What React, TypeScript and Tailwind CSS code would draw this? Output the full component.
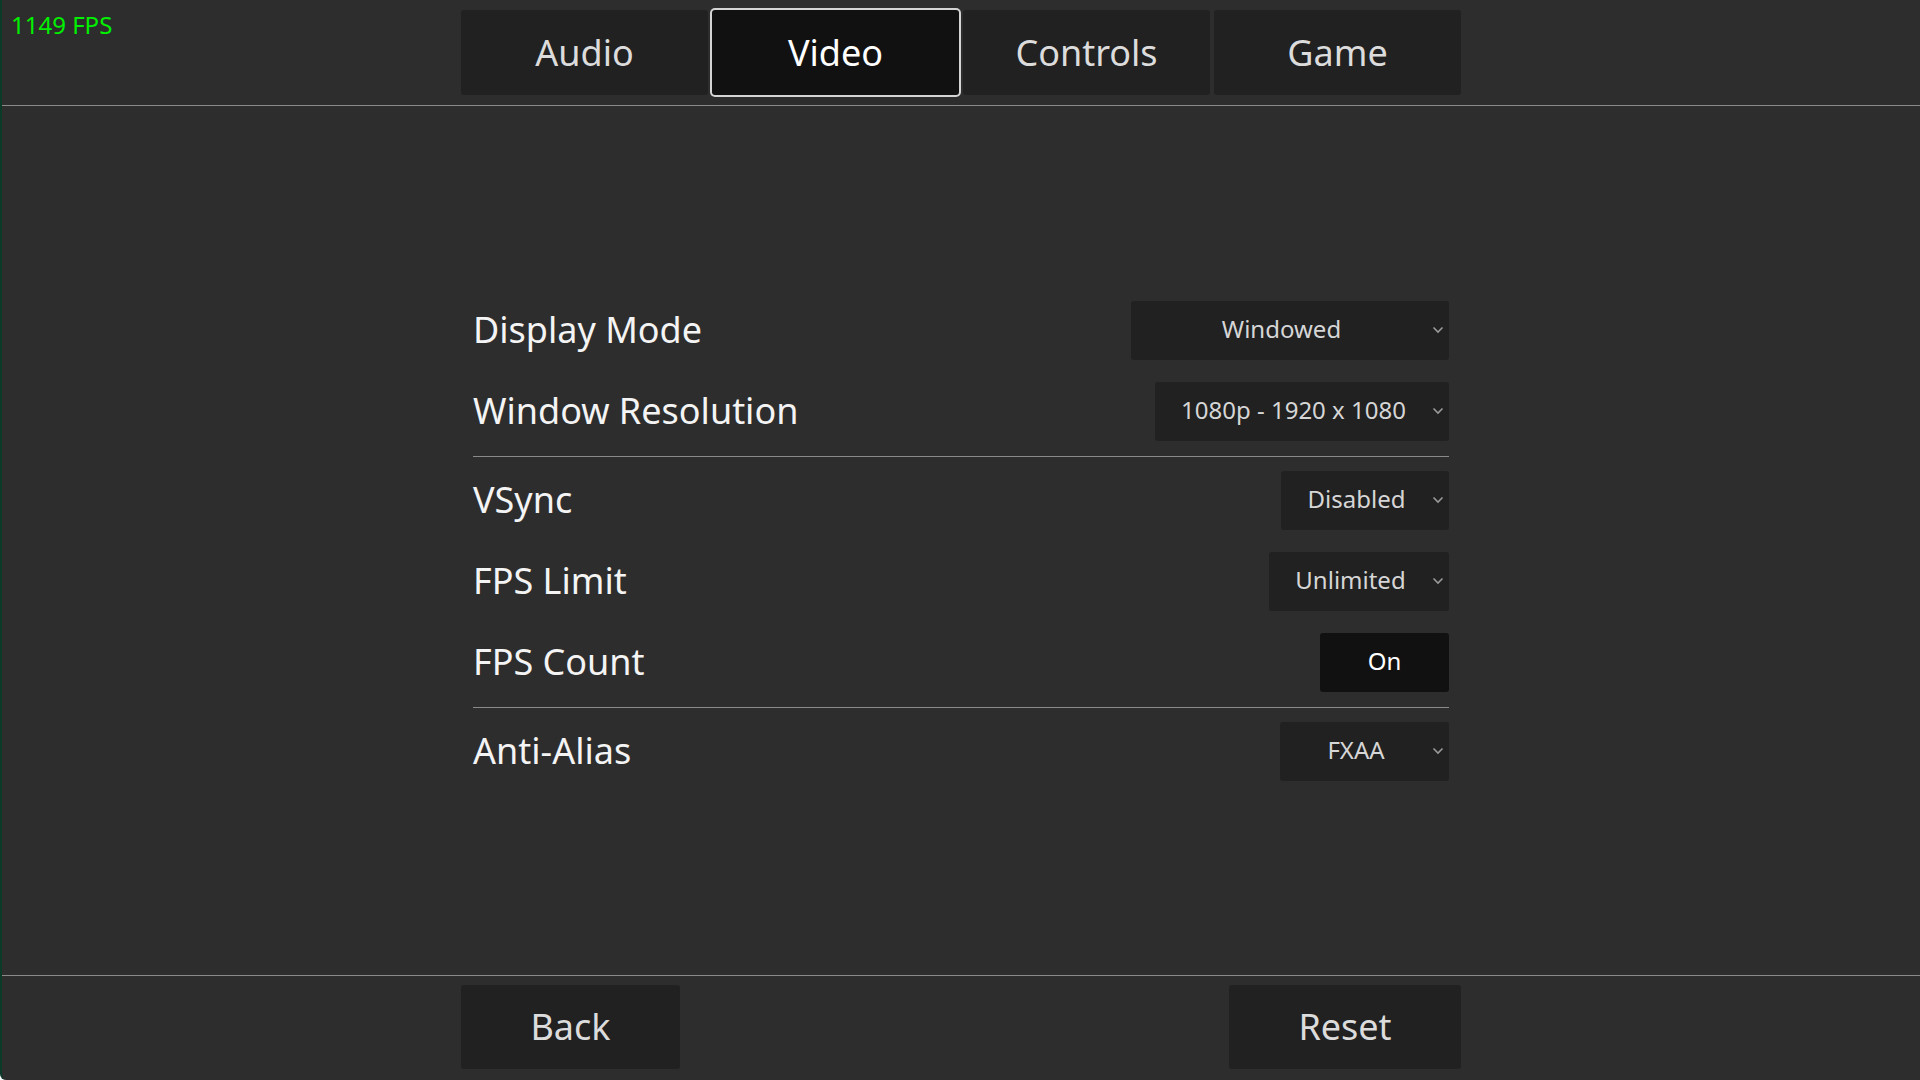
import React from "react";

const tabs = ["Audio", "Video", "Controls", "Game"];

type Row = { label: string; value: string; width: string; toggle?: boolean };

const groups: Row[][] = [
    [
        { label: "Display Mode", value: "Windowed", width: "w-[318px]" },
        { label: "Window Resolution", value: "1080p - 1920 x 1080", width: "w-[294px]" },
    ],
    [
        { label: "VSync", value: "Disabled", width: "w-[168px]" },
        { label: "FPS Limit", value: "Unlimited", width: "w-[180px]" },
        { label: "FPS Count", value: "On", width: "w-[129px]", toggle: true },
    ],
    [{ label: "Anti-Alias", value: "FXAA", width: "w-[169px]" }],
];

const Chevron = () => (
    <svg width="12" height="8" viewBox="0 0 12 8" className="absolute right-[5px] top-1/2 -translate-y-1/2">
        <polyline points="1.5,1.5 6,6 10.5,1.5" fill="none" stroke="#9a9a9a" strokeWidth="1.6" />
    </svg>
);

const SettingRow = ({ row }: { row: Row }) => (
    <div className="flex h-[59px] items-center justify-between">
        <span className="text-[36px] text-[#f4f4f4]">{row.label}</span>
        {row.toggle ? (
            <div className={`flex h-full ${row.width} items-center justify-center rounded-[3px] bg-[#111111] pb-[2px] text-[24px] text-white`}>
                {row.value}
            </div>
        ) : (
            <div className={`relative flex h-full ${row.width} items-center justify-center rounded-[3px] bg-[#212121] pb-[2px] pl-[8px] pr-[25px] text-[24px] text-[#d6d6d6]`}>
                {row.value}
                <Chevron />
            </div>
        )}
    </div>
);

const App = () => {
    return (
        <div className="relative flex h-[1080px] w-[1920px] flex-col overflow-hidden rounded-bl-[6px] border-l-2 border-[#0c3a28] bg-[#2d2d2d] font-['Noto_Sans',sans-serif]">
            {/* fps overlay */}
            <span className="absolute left-[9px] top-[7px] text-[24px] text-[#00f000]">1149 FPS</span>

            <div className="flex h-[105px] justify-center pt-[10px]">
                <div className="grid h-[85px] w-[1000px] grid-cols-4 gap-[4px]">
                    {tabs.map((tab) => (
                        <div
                            key={tab}
                            className={
                                tab === "Video"
                                    ? "flex items-center justify-center rounded-[3px] bg-[#111111] text-[36px] text-white ring-2 ring-[#d4d4d4]"
                                    : "flex items-center justify-center rounded-[3px] bg-[#212121] text-[36px] text-[#dcdcdc]"
                            }
                        >
                            {tab}
                        </div>
                    ))}
                </div>
            </div>
            <div className="h-px bg-[#8a8a8a]" />

            <div className="flex flex-1 items-center justify-center">
                <div className="flex w-[976px] flex-col">
                    {groups.map((group, i) => (
                        <div key={i} className="flex flex-col">
                            {i > 0 && <div className="mb-[14px] mt-[15px] h-px bg-[#8a8a8a]" />}
                            <div className="flex flex-col gap-[22px]">
                                {group.map((row) => (
                                    <SettingRow key={row.label} row={row} />
                                ))}
                            </div>
                        </div>
                    ))}
                </div>
            </div>

            <div className="h-px bg-[#8a8a8a]" />
            <div className="flex h-[104px] justify-center pt-[9px]">
                <div className="flex h-[84px] w-[1000px] justify-between">
                    <div className="flex w-[219px] items-center justify-center rounded-[3px] bg-[#212121] text-[36px] text-[#dcdcdc]">
                        Back
                    </div>
                    <div className="flex w-[232px] items-center justify-center rounded-[3px] bg-[#212121] text-[36px] text-[#dcdcdc]">
                        Reset
                    </div>
                </div>
            </div>
        </div>
    );
};

export default App;
